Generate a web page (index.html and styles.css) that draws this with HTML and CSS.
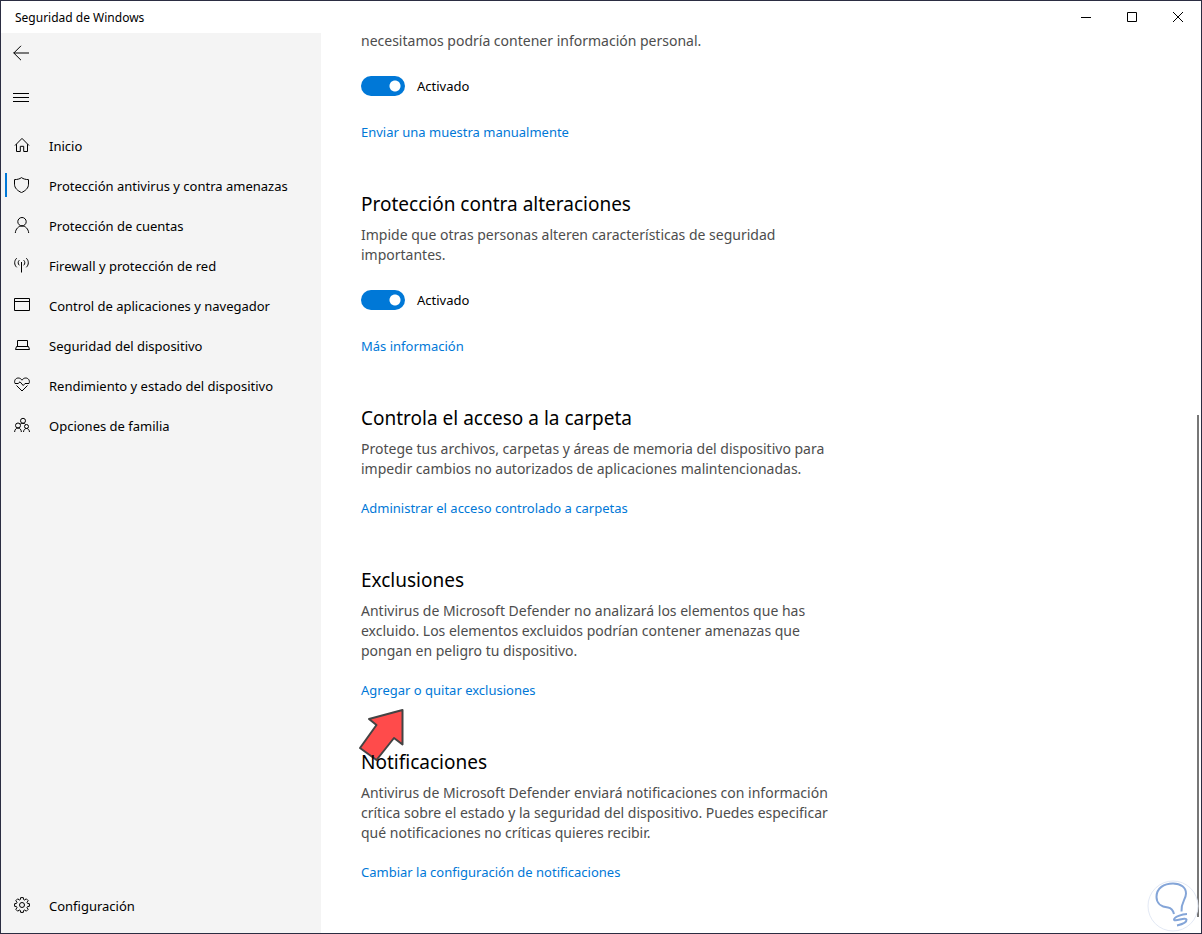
FILE: index.html
```html
<!DOCTYPE html>
<html lang="es">
<head>
    <meta charset="UTF-8">
    <meta name="viewport" content="width=device-width, initial-scale=1.0">
    <title>Seguridad de Windows</title>
    <link rel="stylesheet" href="styles.css">
</head>
<body>
    <div class="window">
        <header class="titlebar">
            <span class="title">Seguridad de Windows</span>
            <div class="window-buttons">
                <button type="button" aria-label="Minimizar">
                    <svg width="10" height="10" viewBox="0 0 10 10"><path d="M0 5.5h10"/></svg>
                </button>
                <button type="button" aria-label="Maximizar">
                    <svg width="10" height="10" viewBox="0 0 10 10"><path d="M.5.5h9v9h-9z"/></svg>
                </button>
                <button type="button" aria-label="Cerrar">
                    <svg width="10" height="10" viewBox="0 0 10 10"><path d="M0 0l10 10M10 0L0 10"/></svg>
                </button>
            </div>
        </header>

        <div class="content">
            <aside class="sidebar">
                <button type="button" class="icon-btn" aria-label="Atrás">
                    <svg width="16" height="16" viewBox="0 0 16 16"><path d="M.5 8H16M8 .8L.8 8 8 15.2"/></svg>
                </button>
                <button type="button" class="icon-btn" aria-label="Menú">
                    <svg width="16" height="16" viewBox="0 0 16 16"><path d="M0 4.5h16M0 8.5h16M0 12.5h16"/></svg>
                </button>
                <nav class="nav">
                    <a href="#">
                        <svg width="16" height="16" viewBox="0 0 16 16"><path d="M1 8.5L8 1.4l7 7.1M2.5 7.2v7.300h3.800V9.300h3.400v5.200h3.800V7.200"/></svg>
                        Inicio
                    </a>
                    <a href="#" class="active">
                        <svg width="16" height="16" viewBox="0 0 16 16"><path d="M7.5.6C5.800 2 3 2.600.5 2.600v4.600c0 4 3.200 6.600 7 8.400 3.800-1.800 7-4.400 7-8.400V2.600C12 2.600 9.200 2 7.500.6z"/></svg>
                        Protección antivirus y contra amenazas
                    </a>
                    <a href="#">
                        <svg width="16" height="16" viewBox="0 0 16 16"><circle cx="8" cy="4.7" r="4.2"/><path d="M1.300 16c.4-4.200 3.200-7 6.700-7s6.300 2.800 6.700 7"/></svg>
                        Protección de cuentas
                    </a>
                    <a href="#">
                        <svg width="16" height="16" viewBox="0 0 16 16"><path d="M7.500 5v10.500M2.700 1.200C0 3.700 0 7.800 2.700 10.300M5.300 3.200c-1.500 1.500-1.500 3.600 0 5.100M12.300 1.200c2.700 2.500 2.700 6.600 0 9.100M9.700 3.200c1.500 1.500 1.500 3.600 0 5.100"/></svg>
                        Firewall y protección de red
                    </a>
                    <a href="#">
                        <svg width="16" height="16" viewBox="0 0 16 16"><path d="M.5 1.500h15v12H.5zM.5 4.500h15"/></svg>
                        Control de aplicaciones y navegador
                    </a>
                    <a href="#">
                        <svg width="16" height="16" viewBox="0 0 16 16"><path d="M3.500 9.500v-6h10v6M2.500 9.500h12l1 3h-14z"/></svg>
                        Seguridad del dispositivo
                    </a>
                    <a href="#">
                        <svg width="16" height="16" viewBox="0 0 16 16"><path d="M1 6.500C-.3 3.500 1.800 1 4.200 1 6 1 7.300 2 8 3.200 8.700 2 10 1 11.800 1c2.400 0 4.500 2.500 3.200 5.500M1 6.500h3.200L6 4.800l3.200 3.700 1.800-2h4M2.500 8.500L8 14l5.500-5.500"/></svg>
                        Rendimiento y estado del dispositivo
                    </a>
                    <a href="#">
                        <svg width="16" height="16" viewBox="0 0 16 16"><circle cx="9" cy="3.8" r="2.5"/><circle cx="4" cy="8.5" r="2.5"/><circle cx="12.5" cy="9.5" r="2"/><path d="M.6 15c.2-2.500 1.500-4 3.400-4s3.200 1.500 3.400 4M9.500 15c.2-2.200 1.300-3.500 3-3.500s2.800 1.300 3 3.500M6 7.500c.8-.9 1.800-1.200 3-1.200s2 .4 2.600 1.200"/></svg>
                        Opciones de familia
                    </a>
                </nav>
                <nav class="nav nav-bottom">
                    <a href="#">
                        <svg width="16" height="16" viewBox="0 0 16 16"><circle cx="8" cy="8" r="2.5"/><path d="M6.700.6h2.600l.3 1.900 1.100.5 1.600-1.200 1.900 1.900L13 5.300l.5 1.100 1.900.3v2.600l-1.900.3-.5 1.100 1.200 1.600-1.900 1.900-1.600-1.200-1.100.5-.3 1.900H6.700l-.3-1.900-1.100-.5-1.600 1.200-1.900-1.900L3 10.700l-.5-1.100-1.900-.3V6.700l1.900-.3L3 5.300 1.800 3.700l1.900-1.900L5.300 3l1.100-.5z"/></svg>
                        Configuración
                    </a>
                </nav>
            </aside>

            <main class="main">
                <section>
                    <p>necesitamos podría contener información personal.</p>
                    <label class="toggle"><input type="checkbox" checked>Activado</label>
                    <a href="#">Enviar una muestra manualmente</a>
                </section>
                <section>
                    <h2>Protección contra alteraciones</h2>
                    <p>Impide que otras personas alteren características de seguridad importantes.</p>
                    <label class="toggle"><input type="checkbox" checked>Activado</label>
                    <a href="#">Más información</a>
                </section>
                <section>
                    <h2>Controla el acceso a la carpeta</h2>
                    <p>Protege tus archivos, carpetas y áreas de memoria del dispositivo para impedir cambios no autorizados de aplicaciones malintencionadas.</p>
                    <a href="#">Administrar el acceso controlado a carpetas</a>
                </section>
                <section class="exclusions">
                    <h2>Exclusiones</h2>
                    <p>Antivirus de Microsoft Defender no analizará los elementos que has excluido. Los elementos excluidos podrían contener amenazas que pongan en peligro tu dispositivo.</p>
                    <a href="#">Agregar o quitar exclusiones</a>
                    <svg class="pointer" width="50" height="56" viewBox="0 0 50 56"><path d="M44.500 3L11 12l7.500 6L2 41l16.500 12L36 31l8.500 6.500z"/></svg>
                </section>
                <section>
                    <h2>Notificaciones</h2>
                    <p>Antivirus de Microsoft Defender enviará notificaciones con información crítica sobre el estado y la seguridad del dispositivo. Puedes especificar qué notificaciones no críticas quieres recibir.</p>
                    <a href="#">Cambiar la configuración de notificaciones</a>
                </section>
                <div class="scrollbar"></div>
                <svg class="badge" width="52" height="52" viewBox="0 0 52 52">
                    <circle cx="26" cy="26" r="25"/>
                    <path d="M27 34c-1-4-3-6-6-6.500C14 27 9.500 23 9.500 17 9.500 8 17 3.500 26 3.500c8 0 13 4 13 10 0 6-5 8-4.500 18M40 34c-5 0-13 3-13 5.500 0 3 12-3 12.500 0 .3 3-5 5-9.500 6"/>
                </svg>
            </main>
        </div>
    </div>
</body>
</html>
```
FILE: styles.css
```css
* {
    box-sizing: border-box;
}
body {
    margin: 0;
    font-family: "Noto Sans", "Open Sans", sans-serif;
    font-size: 13px;
    line-height: 20px;
    color: #000;
}
.window {
    display: flex;
    flex-direction: column;
    min-height: 100vh;
    border: 1px solid #2b2d42;
    background: #fff;
}
svg {
    fill: none;
    stroke: #000;
    flex-shrink: 0;
}
button {
    display: flex;
    align-items: center;
    justify-content: center;
    padding: 0;
    border: 0;
    background: none;
}
a {
    text-decoration: none;
}

/* title bar */
.titlebar {
    display: flex;
    justify-content: space-between;
    height: 32px;
    flex-shrink: 0;
}
.title {
    padding: 7px 14px 0;
    font-size: 12px;
}
.window-buttons {
    display: flex;
}
.window-buttons button {
    width: 46px;
}

.content {
    display: flex;
    flex: 1;
}

/* sidebar */
.sidebar {
    display: flex;
    flex-direction: column;
    width: 320px;
    flex-shrink: 0;
    padding-bottom: 7px;
    background: #f4f4f4;
}
.icon-btn {
    width: 40px;
    height: 40px;
    margin-bottom: 4px;
}
.nav {
    margin-top: 5px;
}
.nav a {
    display: flex;
    align-items: center;
    gap: 19px;
    height: 40px;
    padding-left: 9px;
    border-left: 4px solid transparent;
    color: #000;
}
.nav svg {
    margin-bottom: 2px;
}
.nav a.active {
    position: relative;
}
.nav a.active::before {
    content: "";
    position: absolute;
    left: 0;
    top: 7px;
    width: 2px;
    height: 24px;
    background: #0078d7;
}
.nav-bottom {
    margin-top: auto;
}

/* settings */
.main {
    position: relative;
    z-index: 0;
    flex: 1;
    padding-left: 40px;
}
section {
    max-width: 480px;
    margin-bottom: 48px;
}
h2 {
    margin: 0 0 7px;
    font-size: 19px;
    font-weight: 400;
    line-height: 28px;
}
p {
    margin: 0;
    font-size: 14px;
    color: #4d4d4d;
}
section:first-child p {
    padding-bottom: 2px;
    line-height: 16px;
}
section a {
    display: block;
    width: fit-content;
    margin-top: 19px;
    color: #0078d7;
}
.toggle {
    display: flex;
    align-items: center;
    gap: 12px;
    width: fit-content;
    margin-top: 25px;
}
.toggle + a {
    margin-top: 26px;
}
.toggle input {
    appearance: none;
    width: 44px;
    height: 20px;
    margin: 0;
    border-radius: 10px;
    background: radial-gradient(circle at 34px 10px, #fff 5px, #0078d7 6px);
}
section:last-of-type {
    margin-bottom: 0;
}
.exclusions {
    position: relative;
}
.pointer {
    position: absolute;
    left: -3px;
    bottom: -63px;
    z-index: -1;
    fill: #ff4b4b;
    stroke: #444;
    stroke-width: 2;
    stroke-linejoin: round;
}
.scrollbar {
    position: absolute;
    right: 2px;
    top: 382px;
    bottom: 16px;
    width: 2px;
    background: #777;
}
.badge {
    position: absolute;
    right: 2px;
    bottom: 1px;
    fill: #fff;
    stroke: #e3e9f5;
}
.badge path {
    fill: none;
    stroke: #84a5d8;
    stroke-width: 2;
}
```
